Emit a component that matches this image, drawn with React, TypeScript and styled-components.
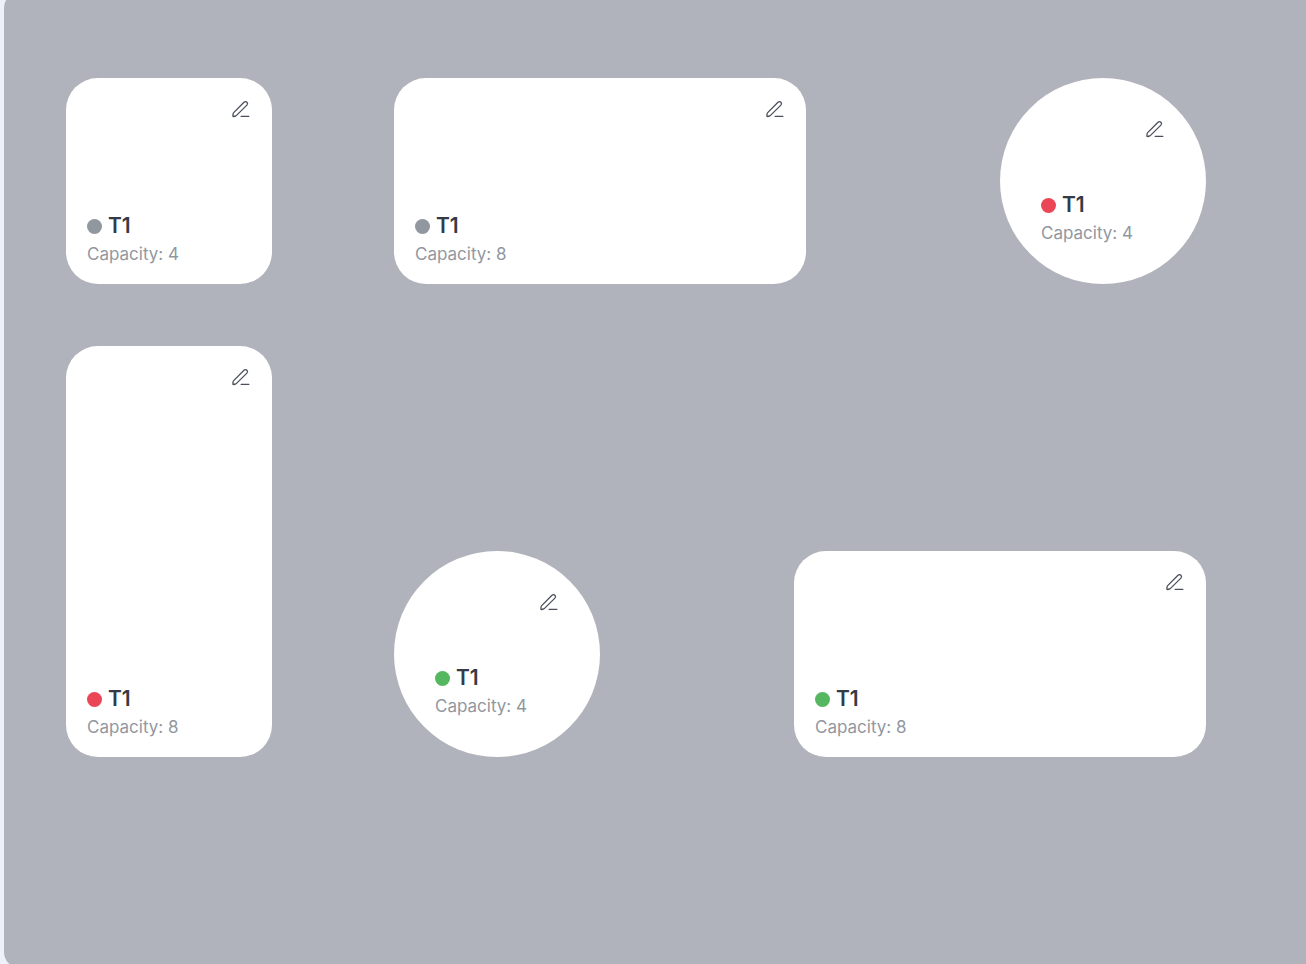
import React from "react";
import styled, { createGlobalStyle, css } from "styled-components";

type Status = "idle" | "busy" | "free";
type Shape = "square" | "wide" | "tall" | "round";

const statusColor: Record<Status, string> = {
  idle: "#91979f",
  busy: "#ea4655",
  free: "#55b75f",
};

const GlobalStyle = createGlobalStyle`
  *, *::before, *::after { box-sizing: border-box; }
  body {
    margin: 0;
    background: #edf2f8;
    font-family: Inter, "Liberation Sans", sans-serif;
  }
`;

const Page = styled.div`
  height: 100vh;
  overflow: hidden;
  padding-left: 4px;
`;

const FloorPlan = styled.main`
  display: grid;
  grid-template-columns: 206px 1fr;
  grid-template-rows: auto auto;
  align-content: start;
  gap: 62px 122px;
  height: calc(100vh + 12px);
  margin-top: -8px;
  padding: 86px 100px 0 62px;
  border-radius: 16px 0 0 16px;
  background: #b0b3bb;
`;

const Zone = styled.section`
  display: flex;
  justify-content: space-between;
  align-items: flex-end;
`;

const shapes = {
  square: css`
    width: 206px;
    height: 206px;
    padding: 21px 21px 20px;
    border-radius: 32px;
  `,
  wide: css`
    width: 412px;
    height: 206px;
    padding: 21px 21px 20px;
    border-radius: 32px;
  `,
  tall: css`
    width: 206px;
    height: 411px;
    padding: 21px 21px 20px;
    border-radius: 32px;
  `,
  round: css`
    width: 206px;
    height: 206px;
    padding: 41px;
    border-radius: 50%;
  `,
};

const Card = styled.article<{ $shape: Shape }>`
  display: flex;
  flex-direction: column;
  justify-content: space-between;
  background: #fff;
  ${({ $shape }) => shapes[$shape]}
`;

const EditButton = styled.button`
  display: flex;
  align-self: flex-end;
  padding: 0;
  border: 0;
  background: none;
  color: #4b4f5c;
  cursor: pointer;
`;

const Title = styled.h2`
  display: flex;
  align-items: center;
  gap: 6px;
  margin: 0 0 4px;
  color: #343b46;
  font-size: 21px;
  font-weight: 600;
  line-height: 28px;
`;

const Dot = styled.span<{ $status: Status }>`
  width: 15px;
  height: 15px;
  border-radius: 50%;
  background: ${({ $status }) => statusColor[$status]};
`;

const Capacity = styled.p`
  margin: 0;
  color: #91979f;
  font-size: 17px;
  line-height: 20px;
`;

const EditIcon = () => (
  <svg
    width="20"
    height="20"
    viewBox="0 0 20 20"
    fill="none"
    stroke="currentColor"
    strokeWidth="1.3"
    strokeLinecap="round"
    strokeLinejoin="round"
    aria-hidden="true"
  >
    <path d="M2.7 13.6 13 3.3c.9-.9 2.1-.9 2.9-.1.8.8.8 2 0 2.9L5.5 16.4c-.3.3-.6.5-1 .6l-1.9.5c-.5.1-.8-.2-.7-.7l.2-2.1c.1-.4.3-.8.6-1.1Z" />
    <path d="M10.2 17.4h7.6" />
  </svg>
);

interface TableProps {
  shape: Shape;
  status: Status;
  capacity: number;
}

const TableCard = ({ shape, status, capacity }: TableProps) => (
  <Card $shape={shape}>
    <EditButton type="button" aria-label="Edit table T1">
      <EditIcon />
    </EditButton>
    <div>
      <Title>
        <Dot $status={status} />
        T1
      </Title>
      <Capacity>Capacity: {capacity}</Capacity>
    </div>
  </Card>
);

export default function App() {
  return (
    <>
      <GlobalStyle />
      <Page>
        <FloorPlan>
          <Zone>
            <TableCard shape="square" status="idle" capacity={4} />
          </Zone>
          <Zone>
            <TableCard shape="wide" status="idle" capacity={8} />
            <TableCard shape="round" status="busy" capacity={4} />
          </Zone>
          <Zone>
            <TableCard shape="tall" status="busy" capacity={8} />
          </Zone>
          <Zone>
            <TableCard shape="round" status="free" capacity={4} />
            <TableCard shape="wide" status="free" capacity={8} />
          </Zone>
        </FloorPlan>
      </Page>
    </>
  );
}
